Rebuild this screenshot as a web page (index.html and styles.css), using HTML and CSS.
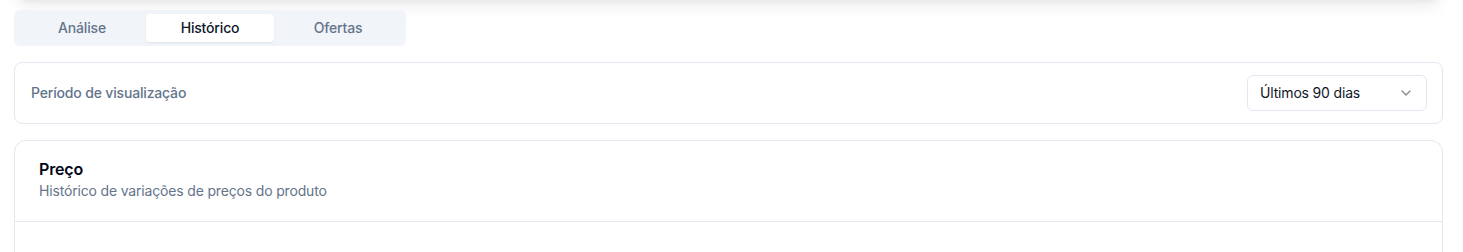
FILE: index.html
```html
<!DOCTYPE html>
<html lang="pt-BR">
<head>
<meta charset="utf-8">
<title>Histórico</title>
<link rel="stylesheet" href="styles.css">
</head>
<body>
<div class="page">
  <div class="top-shadow"></div>
  <div class="tabs">
    <button class="tab">Análise</button>
    <button class="tab active">Histórico</button>
    <button class="tab">Ofertas</button>
  </div>
  <section class="card filter-card">
    <span class="filter-label">Período de visualização</span>
    <button class="select">
      <span>Últimos 90 dias</span>
      <svg class="chev" width="16" height="16" viewBox="0 0 24 24" fill="none" stroke="currentColor" stroke-width="2" stroke-linecap="round" stroke-linejoin="round"><path d="m6 9 6 6 6-6"/></svg>
    </button>
  </section>
  <section class="card price-card">
    <header class="price-header">
      <h2 class="price-title">Preço</h2>
      <p class="price-desc">Histórico de variações de preços do produto</p>
    </header>
    <div class="price-body"></div>
  </section>
</div>
</body>
</html>
```

FILE: styles.css
```css
* { box-sizing: border-box; }
html, body { margin: 0; padding: 0; background: #fff; }
body {
  font-family: Inter, "Noto Sans", "Liberation Sans", sans-serif;
  color: #0f172a;
  letter-spacing: -0.17px;
  overflow: hidden;
}
.page {
  padding: 0 20px 0 14px;
  display: flex;
  flex-direction: column;
}
.top-shadow {
  height: 40px;
  margin-top: -40px;
  background: #fff;
  border-radius: 12px;
  box-shadow: 0 10px 15px -3px rgba(0,0,0,0.07), 0 4px 6px -4px rgba(0,0,0,0.07);
}
.tabs {
  margin-top: 10px;
  width: 392px;
  height: 36px;
  padding: 4px;
  background: #f1f5f9;
  border-radius: 6px;
  display: grid;
  grid-template-columns: repeat(3, 1fr);
}
.tab {
  border: 0;
  background: transparent;
  font-family: inherit;
  letter-spacing: inherit;
  font-size: 14px;
  font-weight: 500;
  color: #64748b;
  border-radius: 4px;
  padding: 0 0 2px;
  cursor: pointer;
}
.tab.active {
  background: #fff;
  color: #0f172a;
  box-shadow: 0 1px 2px rgba(0,0,0,0.08);
}
.card {
  background: #fff;
  border: 1px solid #e2e8f0;
}
.filter-card {
  margin-top: 16px;
  border-radius: 8px;
  padding: 12px 15px 12px 16px;
  display: flex;
  align-items: center;
  justify-content: space-between;
}
.filter-label {
  font-size: 14px;
  font-weight: 500;
  color: #64748b;
  padding-bottom: 2px;
}
.select {
  width: 180px;
  height: 36px;
  border: 1px solid #e2e8f0;
  border-radius: 6px;
  background: #fff;
  padding: 0 12px 1px;
  display: flex;
  align-items: center;
  justify-content: space-between;
  font-family: inherit;
  letter-spacing: inherit;
  font-size: 14px;
  color: #0f172a;
}
.chev { color: #0f172a; opacity: 0.5; }
.price-card {
  margin-top: 16px;
  border-radius: 12px;
  min-height: 300px;
}
.price-header {
  padding: 16px 24px 20px;
  border-bottom: 1px solid #e2e8f0;
}
.price-title {
  margin: 0;
  font-size: 16px;
  line-height: 24px;
  font-weight: 600;
  color: #020617;
}
.price-desc {
  margin: 0;
  font-size: 14px;
  line-height: 20px;
  color: #64748b;
}
.price-body { height: 100px; }
```
